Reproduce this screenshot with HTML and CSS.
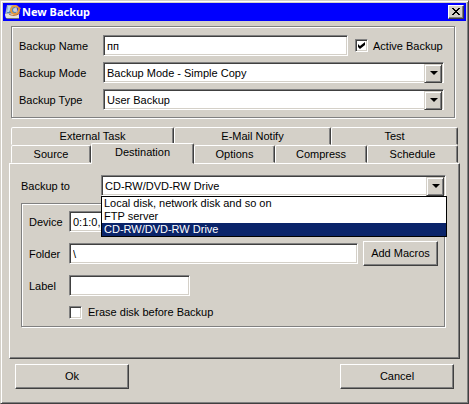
FILE: index.html
```html
<!DOCTYPE html>
<html lang="en">
<head>
    <meta charset="UTF-8">
    <meta name="viewport" content="width=device-width, initial-scale=1.0">
    <title>New Backup</title>
    <link rel="stylesheet" href="styles.css">
</head>
<body>
    <form class="window">
        <header class="title-bar">
            <svg class="title-icon" viewBox="0 0 16 16" aria-hidden="true">
                <path d="M2 1h9l3 10-1 3H1l-1-3z" fill="#a9b4bd"/>
                <path d="M3 2h7l1 7H2z" fill="#4f86b8"/>
                <path d="M3 2h4L4 8H2z" fill="#b9d8ee"/>
                <path d="M0 10h14v4H1z" fill="#e2e2de"/>
                <path d="M1 14h13v1H2z" fill="#6d7277"/>
                <circle cx="10" cy="6" r="4" fill="none" stroke="#e69a3c" stroke-width="2"/>
                <circle cx="10" cy="6" r="2" fill="#c9d3da"/>
                <path d="M4 10c3 2 7 2 11-1" fill="none" stroke="#b86a28" stroke-width="1"/>
                <path d="M13 3l3 1-2 3z" fill="#d98a35"/>
            </svg>
            <h1>New Backup</h1>
            <button type="button" class="close" aria-label="Close">
                <svg viewBox="0 0 8 7" shape-rendering="crispEdges" aria-hidden="true">
                    <path d="M0 0h2v1h1v1h2v-1h1v-1h2v1h-1v1h-1v1h-1v1h1v1h1v1h1v1h-2v-1h-1v-1h-2v1h-1v1h-2v-1h1v-1h1v-1h1v-1h-1v-1h-1v-1h-1z"/>
                </svg>
            </button>
        </header>

        <section class="group general">
            <label for="name">Backup Name</label>
            <div class="row">
                <input type="text" id="name" value="пп">
                <label class="check"><input type="checkbox" checked> Active Backup</label>
            </div>

            <label for="mode">Backup Mode</label>
            <div class="combo">
                <select id="mode"><option>Backup Mode - Simple Copy</option></select>
            </div>

            <label for="type">Backup Type</label>
            <div class="combo">
                <select id="type"><option>User Backup</option></select>
            </div>
        </section>

        <nav class="tabs">
            <div class="tab-row back">
                <button type="button">External Task</button>
                <button type="button">E-Mail Notify</button>
                <button type="button">Test</button>
            </div>
            <div class="tab-row front">
                <button type="button">Source</button>
                <button type="button" class="active">Destination</button>
                <button type="button">Options</button>
                <button type="button">Compress</button>
                <button type="button">Schedule</button>
            </div>
        </nav>

        <main class="page">
            <div class="target">
                <label for="target">Backup to</label>
                <div class="combo">
                    <select id="target"><option>CD-RW/DVD-RW Drive</option></select>
                    <ul class="list" role="listbox">
                        <li role="option">Local disk, network disk and so on</li>
                        <li role="option">FTP server</li>
                        <li role="option" class="selected" aria-selected="true">CD-RW/DVD-RW Drive</li>
                    </ul>
                </div>
            </div>

            <section class="group drive">
                <label for="device">Device</label>
                <div class="combo">
                    <select id="device"><option>0:1:0,</option></select>
                </div>

                <label for="folder">Folder</label>
                <div class="row">
                    <input type="text" id="folder" value="\">
                    <button type="button" class="btn macros">Add Macros</button>
                </div>

                <label for="label">Label</label>
                <input type="text" id="label" class="short">

                <label class="check erase"><input type="checkbox"> Erase disk before Backup</label>
            </section>
        </main>

        <footer class="actions">
            <button type="submit" class="btn">Ok</button>
            <button type="button" class="btn">Cancel</button>
        </footer>
    </form>
</body>
</html>
```
FILE: styles.css
```css
* {
    box-sizing: border-box;
}

body {
    margin: 0;
    background: #d4d0c8;
    color: #000;
    font: 11px/14px "Liberation Sans", Arial, sans-serif;
}

button, input, select {
    font: inherit;
    color: inherit;
    margin: 0;
    border-radius: 0;
}

/* window frame */
.window {
    min-height: 100vh;
    padding: 2px;
    background: #d4d0c8;
    border: 1px solid;
    border-color: #d4d0c8 #404040 #404040 #d4d0c8;
    box-shadow: inset 1px 1px #fff, inset -1px -1px #808080;
}

.title-bar {
    display: flex;
    align-items: center;
    height: 18px;
    padding: 0 2px;
    background: #00f;
    color: #fff;
}

.title-icon {
    width: 16px;
    height: 16px;
}

h1 {
    flex: 1;
    margin: 0 0 0 1px;
    font: bold 11px/16px "Noto Sans", sans-serif;
}

/* raised buttons */
.close, .btn {
    background: #d4d0c8;
    border: 1px solid;
    border-color: #fff #404040 #404040 #fff;
    box-shadow: inset -1px -1px #808080;
}

.close {
    display: flex;
    width: 16px;
    height: 14px;
    padding: 2px 3px;
}

.close svg {
    width: 8px;
    height: 7px;
}

.btn {
    height: 25px;
    padding: 0 0 1px;
}

/* etched frames */
.group {
    display: grid;
    align-items: center;
    border: 1px solid #808080;
    box-shadow: 1px 1px #fff, inset 1px 1px #fff;
}

.general {
    grid-template-columns: 84px 1fr;
    gap: 6px 0;
    margin: 5px 11px 9px 8px;
    padding: 8px 10px 7px 7px;
}

.row {
    display: flex;
    align-items: center;
}

/* sunken fields */
input[type="text"], .combo {
    height: 21px;
    background: #fff;
    border: 1px solid;
    border-color: #808080 #fff #fff #808080;
    box-shadow: inset 1px 1px #404040, inset -1px -1px #d4d0c8;
}

input[type="text"] {
    flex: 1;
    min-width: 0;
    padding: 0 3px;
}

.combo {
    position: relative;
    display: flex;
    padding: 1px;
}

select {
    flex: 1;
    min-width: 0;
    padding: 0 18px 0 2px;
    border: 0;
    background: none;
    appearance: none;
}

.combo::before {
    content: "";
    position: absolute;
    top: 1px;
    right: 1px;
    width: 16px;
    height: 17px;
    background: #d4d0c8;
    border: 1px solid;
    border-color: #d4d0c8 #404040 #404040 #d4d0c8;
    box-shadow: inset 1px 1px #fff, inset -1px -1px #808080;
    pointer-events: none;
}

.combo::after {
    content: "";
    position: absolute;
    top: 8px;
    right: 5px;
    border: 4px solid transparent;
    border-top-color: #000;
    border-bottom: 0;
    pointer-events: none;
}

.check {
    display: flex;
    align-items: center;
    gap: 5px;
    white-space: nowrap;
}

.general .check {
    width: 96px;
    padding-left: 7px;
}

input[type="checkbox"] {
    flex: none;
    width: 13px;
    height: 13px;
    background: #fff;
    border: 1px solid;
    border-color: #808080 #fff #fff #808080;
    box-shadow: inset 1px 1px #404040, inset -1px -1px #d4d0c8;
    appearance: none;
}

input[type="checkbox"]:checked::before {
    content: "";
    display: block;
    width: 7px;
    height: 7px;
    margin: 2px;
    background: #000;
    clip-path: polygon(0 28%, 28% 57%, 100% 0, 100% 42%, 28% 100%, 0 71%);
}

/* tabs */
.tabs {
    margin: 0 8px;
}

.tab-row {
    display: grid;
}

.back {
    grid-template-columns: 163fr 157fr 127fr;
}

.front {
    grid-template-columns: 80fr 103fr 81fr 92fr 91fr;
}

.tab-row button {
    height: 18px;
    padding: 0;
    background: #d4d0c8;
    border: 1px solid;
    border-color: #fff #404040 transparent #fff;
    border-radius: 2px 2px 0 0;
    box-shadow: inset -1px 0 #808080;
}

.tab-row .active {
    position: relative;
    height: 21px;
    margin-top: -2px;
    margin-bottom: -1px;
    padding-bottom: 3px;
    border-bottom-color: #d4d0c8;
}

.page {
    margin: 0 6px;
    padding: 11px 13px 31px 11px;
    border: 1px solid;
    border-color: #fff #404040 #404040 #fff;
    box-shadow: inset -1px -1px #808080;
}

.target {
    display: grid;
    grid-template-columns: 80px 1fr;
    align-items: center;
    margin-bottom: 7px;
}

.list {
    position: absolute;
    z-index: 1;
    top: 20px;
    left: -1px;
    right: -2px;
    margin: 0;
    padding: 0;
    list-style: none;
    line-height: 13px;
    background: #fff;
    border: 1px solid #000;
}

.list li {
    padding-left: 2px;
}

.list .selected {
    background: #0a246a;
    color: #fff;
}

.drive {
    grid-template-columns: 40px 1fr;
    gap: 9px 0;
    margin-right: 1px;
    padding: 7px 6px 7px 7px;
}

.macros {
    width: 75px;
    margin-left: 5px;
}

.short {
    width: 121px;
}

.erase {
    grid-column: 2;
    gap: 6px;
}

.actions {
    display: flex;
    justify-content: space-between;
    padding: 5px 12px 12px;
}

.actions .btn {
    width: 114px;
}
```
